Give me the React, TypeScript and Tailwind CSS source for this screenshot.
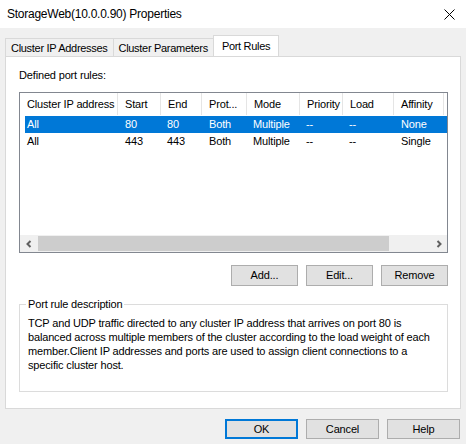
import React from 'react';

const columns = [
  { label: 'Cluster IP address', w: 'w-[98px]', cell: 'w-[93px] pl-[2px]' },
  { label: 'Start', w: 'w-[43px]', cell: 'w-[43px] pl-[7px]' },
  { label: 'End', w: 'w-[41px]', cell: 'w-[41px] pl-[6px]' },
  { label: 'Prot...', w: 'w-[45px]', cell: 'w-[45px] pl-[7px]' },
  { label: 'Mode', w: 'w-[53px]', cell: 'w-[53px] pl-[6px]' },
  { label: 'Priority', w: 'w-[43px]', cell: 'w-[43px] pl-[6px]' },
  { label: 'Load', w: 'w-[51px]', cell: 'w-[51px] pl-[6px]' },
  { label: 'Affinity', w: 'w-[50px]', cell: 'w-[50px] pl-[7px]' },
];

const rules = [
  ['All', '80', '80', 'Both', 'Multiple', '--', '--', 'None'],
  ['All', '443', '443', 'Both', 'Multiple', '--', '--', 'Single'],
];

function Tab({ label, active }: { label: string; active?: boolean }) {
  if (active) {
    return (
      <div className="relative z-10 -mb-px h-[21px] border border-b-0 border-[#d9d9d9] bg-white px-[8px] pt-[2px] leading-[16px] tracking-[-0.3px]">
        {label}
      </div>
    );
  }
  return (
    <div className="mt-[3px] h-[18px] border border-r-0 border-b-0 border-[#d9d9d9] bg-[#f0f0f0] px-[5px] pt-[2px] leading-[15px] tracking-[-0.3px]">
      {label}
    </div>
  );
}

function DialogButton({ label, primary, wide }: { label: string; primary?: boolean; wide?: boolean }) {
  return (
    <button
      className={`${wide ? 'w-[73px] h-[20px]' : 'w-[67px] h-[21px]'} bg-[#e1e1e1] text-[11px] leading-none text-black ${
        primary ? 'border-2 border-[#0078d7]' : 'border border-[#adadad]'
      }`}
    >
      {label}
    </button>
  );
}

export default function App() {
  return (
    <div
      className="w-[466px] h-[444px] bg-[#f0f0f0] text-[11px] tracking-[-0.16px] text-black flex flex-col overflow-hidden"
      style={{ fontFamily: '"Liberation Sans", Arial, sans-serif' }}
    >
      {/* Title bar */}
      <div className="h-[28px] bg-white flex items-center justify-between pl-[7px] pr-[9px] shrink-0">
        <span className="text-[12px] tracking-[-0.25px]">StorageWeb(10.0.0.90) Properties</span>
        <svg width="11" height="11" viewBox="0 0 11 11" className="mr-[2px]">
          <path d="M0.5 0.5 L10.5 10.5 M10.5 0.5 L0.5 10.5" stroke="#000" strokeWidth="1" />
        </svg>
      </div>

      {/* Tabs */}
      <div className="flex items-start pl-[5px] pt-[7px]">
        <Tab label="Cluster IP Addresses" />
        <Tab label="Cluster Parameters" />
        <Tab label="Port Rules" active />
      </div>

      {/* Tab panel */}
      <div className="ml-[5px] w-[456px] h-[353px] border border-[#d9d9d9] bg-white pl-[13px] pr-[12px] pt-[12px]">
        <div className="leading-[13px]">Defined port rules:</div>

        {/* List view */}
        <div className="mt-[10px] h-[161px] border border-[#828790] flex flex-col">
          <div className="flex h-[22px]">
            {columns.map((c) => (
              <div key={c.label} className={`${c.w} border-r border-[#e5e5e5] pl-[7px] pt-[5px] leading-[13px] whitespace-nowrap overflow-hidden`}>
                {c.label}
              </div>
            ))}
          </div>
          <div className="flex-1 pt-[1px]">
            {rules.map((r, i) => (
              <div
                key={i}
                className={`flex h-[17px] items-center ml-[5px] ${i === 0 ? 'bg-[#0078d7] text-white' : ''}`}
              >
                {r.map((cell, j) => (
                  <div key={j} className={`${columns[j].cell} whitespace-nowrap`}>
                    {cell}
                  </div>
                ))}
              </div>
            ))}
          </div>
          {/* Horizontal scrollbar */}
          <div className="h-[17px] bg-[#f0f0f0] flex items-center">
            <div className="w-[17px] flex justify-center">
              <svg width="8" height="8" viewBox="0 0 8 8">
                <path d="M5.5 1 L2.5 4 L5.5 7" stroke="#606060" strokeWidth="2" fill="none" />
              </svg>
            </div>
            <div className="w-[351px] h-[15px] ml-[1px] bg-[#cdcdcd]" />
            <div className="flex-1" />
            <div className="w-[17px] flex justify-center">
              <svg width="8" height="8" viewBox="0 0 8 8">
                <path d="M2.5 1 L5.5 4 L2.5 7" stroke="#606060" strokeWidth="2" fill="none" />
              </svg>
            </div>
          </div>
        </div>

        {/* List buttons */}
        <div className="mt-[12px] flex justify-end gap-[8px]">
          <DialogButton label="Add..." />
          <DialogButton label="Edit..." />
          <DialogButton label="Remove" />
        </div>

        {/* Description group */}
        <fieldset className="mt-[12px] h-[94px] border border-[#dcdcdc]">
          <legend className="ml-[6px] px-[2px] leading-[13px]">Port rule description</legend>
          <p className="mt-[5px] pl-[8px] leading-[14px] whitespace-nowrap">
            TCP and UDP traffic directed to any cluster IP address that arrives on port 80 is
            <br />
            balanced across multiple members of the cluster according to the load weight of each
            <br />
            member.Client IP addresses and ports are used to assign client connections to a
            <br />
            specific cluster host.
          </p>
        </fieldset>
      </div>

      {/* Dialog buttons */}
      <div className="mt-[10px] pr-[6px] flex justify-end gap-[8px]">
        <DialogButton label="OK" primary wide />
        <DialogButton label="Cancel" wide />
        <DialogButton label="Help" wide />
      </div>
    </div>
  );
}
